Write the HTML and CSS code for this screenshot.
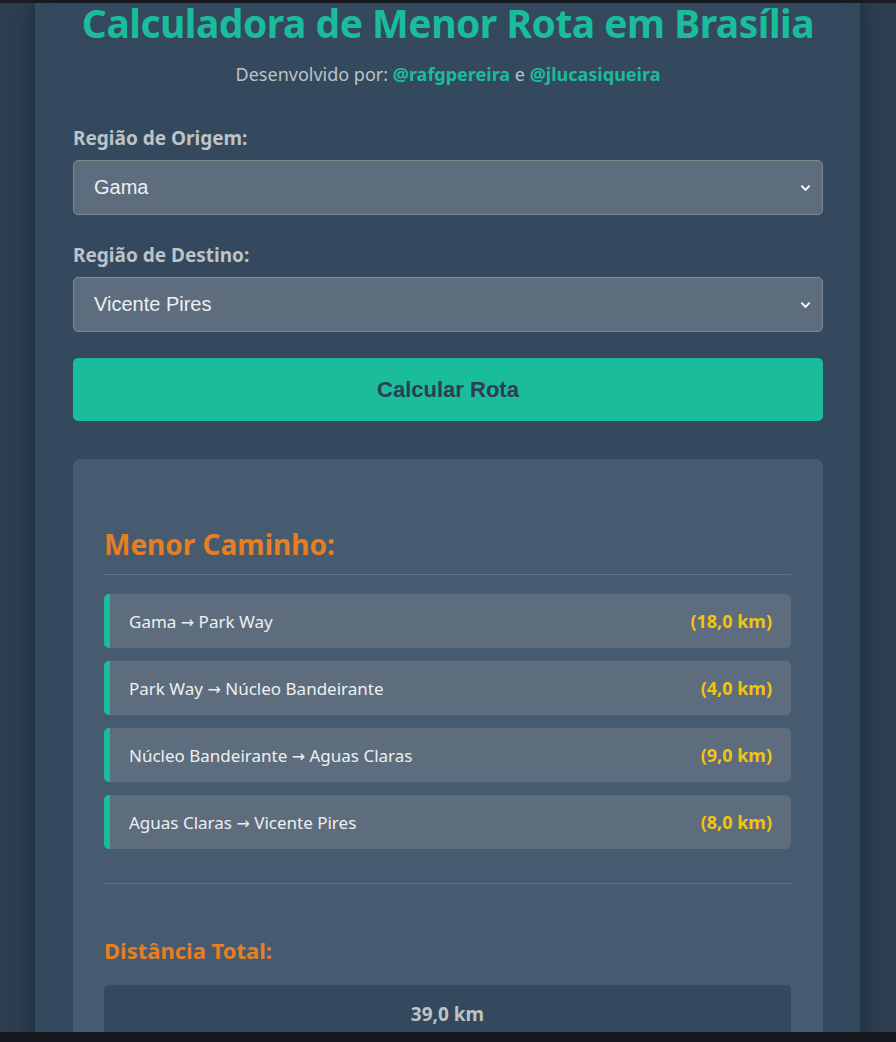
FILE: index.html
```html
<!DOCTYPE html>
<html lang="pt-BR">
<head>
<meta charset="utf-8">
<title>Calculadora de Menor Rota em Brasília</title>
<link rel="stylesheet" href="styles.css">
</head>
<body>
<div class="topbar"></div>
<main class="container">
  <h1 class="title">Calculadora de Menor Rota em Brasília</h1>
  <p class="credits">Desenvolvido por: <a href="#">@rafgpereira</a> e <a href="#">@jlucasiqueira</a></p>

  <div class="field">
    <label class="label">Região de Origem:</label>
    <div class="select">
      <span>Gama</span>
      <svg class="chev" viewBox="0 0 12 8" width="11" height="8"><path d="M1.5 1.5 L6 6 L10.5 1.5" fill="none" stroke="#fff" stroke-width="2"/></svg>
    </div>
  </div>

  <div class="field">
    <label class="label">Região de Destino:</label>
    <div class="select">
      <span>Vicente Pires</span>
      <svg class="chev" viewBox="0 0 12 8" width="11" height="8"><path d="M1.5 1.5 L6 6 L10.5 1.5" fill="none" stroke="#fff" stroke-width="2"/></svg>
    </div>
  </div>

  <button class="btn">Calcular Rota</button>

  <section class="result">
    <h2 class="result-title">Menor Caminho:</h2>
    <hr class="divider">
    <ul class="steps">
      <li class="step"><span>Gama <i class="arrow">→</i> Park Way</span><b>(18,0 km)</b></li>
      <li class="step"><span>Park Way <i class="arrow">→</i> Núcleo Bandeirante</span><b>(4,0 km)</b></li>
      <li class="step"><span>Núcleo Bandeirante <i class="arrow">→</i> Aguas Claras</span><b>(9,0 km)</b></li>
      <li class="step"><span>Aguas Claras <i class="arrow">→</i> Vicente Pires</span><b>(8,0 km)</b></li>
    </ul>
    <hr class="divider divider-bottom">
    <h3 class="total-title">Distância Total:</h3>
    <div class="total">39,0 km</div>
  </section>
</main>
<div class="bottombar"></div>
</body>
</html>
```

FILE: styles.css
```css
html, body {
  margin: 0;
  padding: 0;
}
body {
  background: #2c3e50;
  font-family: "Noto Sans", "Open Sans", sans-serif;
  color: #ecf0f1;
  height: 1042px;
  overflow: hidden;
}
.topbar {
  height: 3px;
  background: #1b1e27;
}
.bottombar {
  position: fixed;
  left: 0;
  right: 0;
  bottom: 0;
  height: 10px;
  background: #161820;
}
.container {
  width: 825px;
  margin-left: 35px;
  background: #34495e;
  box-shadow: 0 0 22px rgba(0, 0, 0, 0.35);
  padding: 0 37px 40px 38px;
  box-sizing: border-box;
  min-height: 1100px;
}
.title {
  margin: 0;
  text-align: center;
  color: #1abc9c;
  font-size: 39px;
  line-height: 40px;
  font-weight: 700;
  letter-spacing: -0.5px;
}
.credits {
  margin: 20px 0 0;
  text-align: center;
  font-size: 18px;
  line-height: 22px;
  color: #bdc3c7;
}
.credits a {
  color: #1abc9c;
  font-weight: 700;
  text-decoration: none;
}
.field {
  margin-top: 41px;
}
.field + .field {
  margin-top: 28px;
}
.label {
  display: block;
  font-size: 19px;
  line-height: 24px;
  font-weight: 700;
  color: #bdc3c7;
  margin-bottom: 10px;
}
.select {
  height: 55px;
  box-sizing: border-box;
  background: #5d6d7e;
  border: 1px solid #7f8c8d;
  border-radius: 5px;
  display: flex;
  align-items: center;
  justify-content: space-between;
  padding: 0 11px 0 20px;
  font-family: "Liberation Sans", Arial, sans-serif;
  font-size: 20px;
  color: #ecf0f1;
}
.chev {
  display: block;
}
.btn {
  display: block;
  width: 100%;
  margin-top: 26px;
  height: 63px;
  border: none;
  border-radius: 5px;
  background: #1abc9c;
  color: #2c3e50;
  font-family: "Liberation Sans", Arial, sans-serif;
  font-size: 22px;
  font-weight: 700;
  cursor: pointer;
}
.result {
  margin-top: 38px;
  background: #475b70;
  border-radius: 8px;
  padding: 68px 32px 40px 31px;
}
.result-title {
  margin: 0;
  color: #e67e22;
  font-size: 28px;
  line-height: 34px;
  font-weight: 700;
}
.divider {
  border: none;
  border-top: 1px solid #5f7184;
  margin: 13px 0 19px;
}
.steps {
  list-style: none;
  margin: 0;
  padding: 0;
  display: flex;
  flex-direction: column;
  gap: 13px;
}
.step {
  height: 54px;
  box-sizing: border-box;
  background: #5d6d7e;
  border-left: 6px solid #1abc9c;
  border-radius: 5px;
  display: flex;
  align-items: center;
  justify-content: space-between;
  padding: 0 19px 0 19px;
  font-size: 17px;
  color: #ecf0f1;
}
.arrow {
  font-style: normal;
  font-family: "DejaVu Sans", sans-serif;
  font-size: 16px;
}
.step b {
  color: #f1c40f;
  font-weight: 700;
  font-size: 18px;
}
.divider-bottom {
  margin-top: 34px;
}
.total-title {
  margin: 52px 0 0;
  color: #e67e22;
  font-size: 22px;
  line-height: 28px;
  font-weight: 700;
}
.total {
  margin-top: 21px;
  height: 58px;
  background: #34495e;
  border-radius: 5px;
  display: flex;
  align-items: center;
  justify-content: center;
  font-size: 19px;
  font-weight: 700;
  color: #bdc3c7;
}
```
